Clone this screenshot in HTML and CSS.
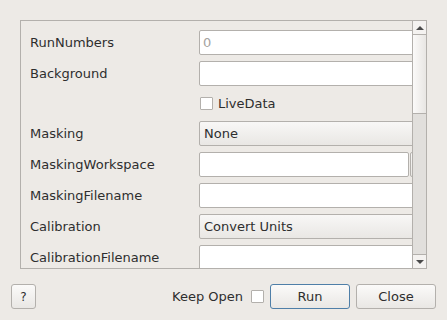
FILE: index.html
```html
<!DOCTYPE html>
<html lang="en">
<head>
    <meta charset="UTF-8">
    <title>Algorithm Dialog</title>
    <link rel="stylesheet" href="styles.css">
</head>
<body>
    <div class="dialog">
        <!-- Scrollable property list -->
        <div class="scroll-area">
            <div class="properties">
                <div class="row">
                    <label class="prop-label">RunNumbers</label>
                    <input class="field" type="text" placeholder="0">
                </div>
                <div class="row">
                    <label class="prop-label">Background</label>
                    <input class="field" type="text">
                </div>
                <div class="row check-row">
                    <span class="prop-label"></span>
                    <label class="check"><span class="box"></span>LiveData</label>
                </div>
                <div class="row">
                    <label class="prop-label">Masking</label>
                    <div class="combo">None</div>
                </div>
                <div class="row">
                    <label class="prop-label">MaskingWorkspace</label>
                    <div class="field-with-button">
                        <input class="field short" type="text">
                        <span class="mini-button"></span>
                    </div>
                </div>
                <div class="row">
                    <label class="prop-label">MaskingFilename</label>
                    <input class="field" type="text">
                </div>
                <div class="row">
                    <label class="prop-label">Calibration</label>
                    <div class="combo">Convert Units</div>
                </div>
                <div class="row">
                    <label class="prop-label">CalibrationFilename</label>
                    <input class="field" type="text">
                </div>
            </div>

            <!-- Vertical scrollbar -->
            <div class="scrollbar">
                <div class="arrow-btn up"><span class="tri-up"></span></div>
                <div class="slider"></div>
                <div class="track"></div>
                <div class="arrow-btn down"><span class="tri-down"></span></div>
            </div>
        </div>

        <!-- Bottom buttons -->
        <div class="button-bar">
            <button class="btn help">?</button>
            <span class="spacer"></span>
            <span class="keep-open">Keep Open</span>
            <span class="box keep-box"></span>
            <button class="btn default">Run</button>
            <button class="btn">Close</button>
        </div>
    </div>
</body>
</html>
```

FILE: styles.css
```css
* {
    box-sizing: border-box;
}

body {
    margin: 0;
    background-color: #edeae6;
    font-family: "DejaVu Sans", sans-serif;
    font-size: 13px;
    color: #2e2e2e;
    width: 447px;
    height: 320px;
    overflow: hidden;
}

.scroll-area {
    margin: 20px 0 0 20px;
    width: 407px;
    height: 249px;
    border: 1px solid #b3b0ac;
    display: flex;
    overflow: hidden;
}

.properties {
    flex: 1;
    overflow: hidden;
    padding: 9px 0 0 9px;
    display: flex;
    flex-direction: column;
    gap: 6px;
}

.row {
    display: flex;
    align-items: center;
    height: 25px;
    flex-shrink: 0;
}

.check-row {
    height: 23px;
}

.prop-label {
    width: 169px;
    flex-shrink: 0;
}

.field {
    width: 240px;
    height: 25px;
    flex-shrink: 0;
    border: 1px solid #b3b0ac;
    border-radius: 2px;
    background: #ffffff;
    padding: 0 3px;
    font: inherit;
    color: inherit;
    outline: none;
}

.field::placeholder {
    color: #a5a3a0;
}

.field-with-button {
    display: flex;
    gap: 1px;
    flex-shrink: 0;
}

.field.short {
    width: 210px;
}

.mini-button {
    width: 30px;
    height: 25px;
    border: 1px solid #b3b0ac;
    border-radius: 2px;
    background: linear-gradient(#f7f6f5, #e9e7e4);
}

.combo {
    width: 240px;
    height: 25px;
    flex-shrink: 0;
    border: 1px solid #b3b0ac;
    border-radius: 2px;
    background: linear-gradient(#f8f7f6, #e9e7e4);
    padding: 0 4px;
    line-height: 23px;
}

.check {
    display: flex;
    align-items: center;
    margin-left: 1px;
}

.box {
    display: inline-block;
    width: 13px;
    height: 13px;
    border: 1px solid #b3b0ac;
    border-radius: 1px;
    background: #ffffff;
    margin-right: 5px;
    flex-shrink: 0;
}

.scrollbar {
    width: 14px;
    flex-shrink: 0;
    border-left: 1px solid #b3b0ac;
    display: flex;
    flex-direction: column;
}

.arrow-btn {
    height: 14px;
    background: #f4f2f0;
    display: flex;
    align-items: center;
    justify-content: center;
    flex-shrink: 0;
}

.arrow-btn.up {
    border-bottom: 1px solid #b3b0ac;
}

.arrow-btn.down {
    border-top: 1px solid #b3b0ac;
}

.tri-up {
    width: 0;
    height: 0;
    border-left: 4px solid transparent;
    border-right: 4px solid transparent;
    border-bottom: 4px solid #4a4a4a;
}

.tri-down {
    width: 0;
    height: 0;
    border-left: 4px solid transparent;
    border-right: 4px solid transparent;
    border-top: 4px solid #4a4a4a;
}

.slider {
    height: 79px;
    flex-shrink: 0;
    border-bottom: 1px solid #b3b0ac;
    background: linear-gradient(to right, #fbfaf9, #e8e6e3);
}

.track {
    flex: 1;
    background-color: #e1dfdc;
}

.button-bar {
    display: flex;
    align-items: center;
    padding: 15px 11px 0 11px;
}

.spacer {
    flex: 1;
}

.keep-open {
    margin-right: 8px;
}

.keep-box {
    margin-right: 6px;
}

.btn {
    height: 25px;
    width: 80px;
    border: 1px solid #b3b0ac;
    border-radius: 3px;
    background: linear-gradient(#fbfaf9, #e9e7e4);
    font: inherit;
    color: inherit;
    padding: 0;
}

.btn + .btn {
    margin-left: 6px;
}

.btn.help {
    width: 25px;
    font-size: 12px;
}

.btn.default {
    border-color: #4f7fa8;
}
```
